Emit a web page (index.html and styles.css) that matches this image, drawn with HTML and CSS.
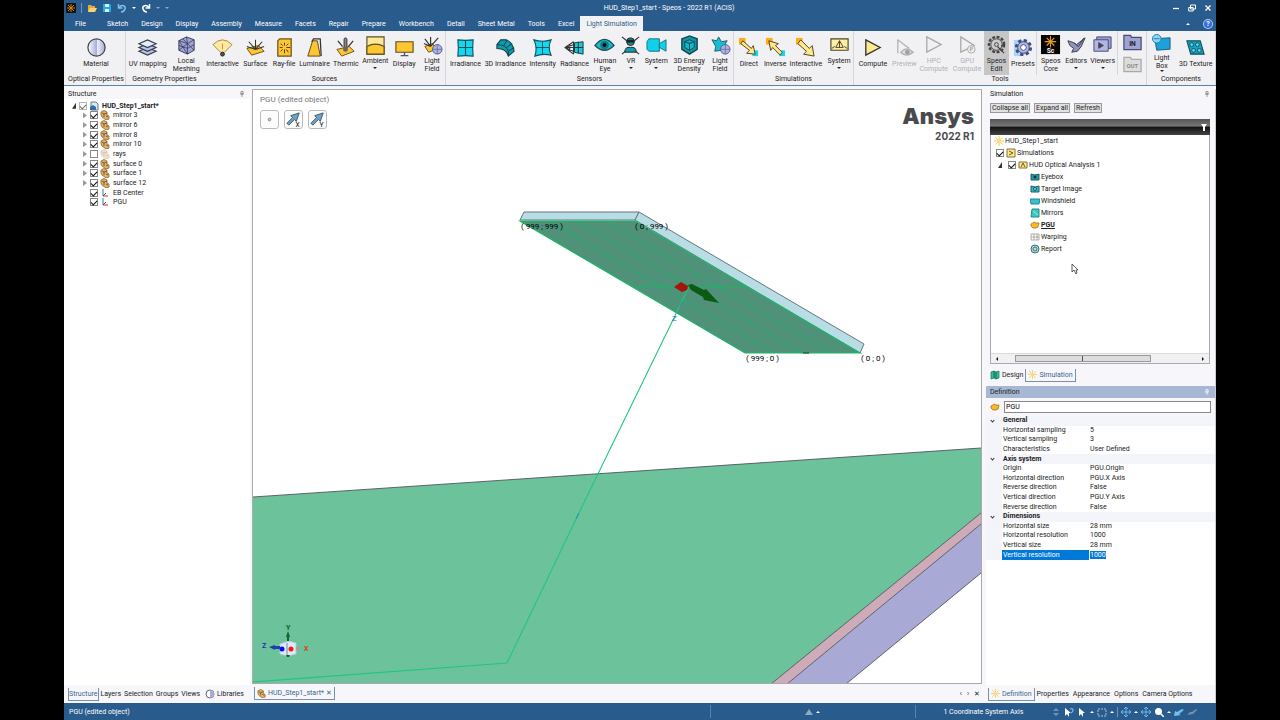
FILE: index.html
```html
<!DOCTYPE html>
<html lang="en">
<head>
  <meta charset="UTF-8">
  <meta name="viewport" content="width=device-width, initial-scale=1.0">
  <title>HUD_Step1_start - Speos</title>
  <link rel="stylesheet" href="styles.css">
</head>
<body>
<svg class="defs" aria-hidden="true">
  <symbol id="part" viewBox="0 0 10 10"><path d="M1 2l3-1.500 3 1.500v3l2 1v3l-3 1-4-3-1-2z" fill="#e2b26c" stroke="#8a622c" stroke-width=".8"/><path d="M2 3l2 1v3M4 4l3-1M6 6l2 1" stroke="#6b4416" fill="none" stroke-width=".8"/></symbol>
  <symbol id="sun" viewBox="0 0 10 10"><path d="M5 0v10M0 5h10M1.500 1.500l7 7M8.500 1.500l-7 7" stroke="#f7c95c"/><circle cx="5" cy="5" r="2" fill="#fbdc8c"/></symbol>
  <symbol id="axes" viewBox="0 0 10 10"><path d="M3 1v7" stroke="#277db0"/><path d="M3 8h5" stroke="#c33"/><path d="M3 8l3-3" stroke="#555"/></symbol>
  <symbol id="pin" viewBox="0 0 6 6"><path d="M2 .5h2v2.500h-2zM1 3h4M3 3v3" fill="none" stroke="currentColor" stroke-width=".7"/></symbol>
  <symbol id="pgu" viewBox="0 0 10 8"><path d="M1 3l2-1 1-1 2 1h3l-1 4-2 1H3L1 5z" fill="#fdb924" stroke="#8a661a" stroke-width=".7"/></symbol>
</svg>
<div class="app">
  <header class="titlebar">
    <div class="quick">
      <svg width="10" height="10" viewBox="0 0 10 10"><path d="M0 0h10v10H0z" fill="#171310"/><path d="M5 1v8M1 5h8M2 2l6 6M8 2l-6 6" stroke="#d98a1a" stroke-width=".9"/></svg>
      <i class="sep"></i>
      <svg width="10" height="10" viewBox="0 0 10 10"><path d="M1 9V2h3l1 1h3v2" fill="#e9a83a"/><path d="M1 9l2-4h7L8 9z" fill="#ffd272"/></svg>
      <svg width="10" height="10" viewBox="0 0 10 10"><path d="M1 1h7l1 1v7H1z" fill="#27a7ee"/><path d="M3 1h4v3H3zM3 6h4v3H3z" fill="#d8efff"/></svg>
      <svg width="10" height="10" viewBox="0 0 10 10"><path d="M1.500 1v4h4M2 4.500C5 1 9 3 8 6S5 9 4 9" fill="none" stroke="#7fbcf0" stroke-width="1.500"/></svg>
      <i class="caret"></i>
      <svg width="10" height="10" viewBox="0 0 10 10"><path d="M8.500 1v4h-4M8 4.500C5 1 1 3 2 6s3 3 4 3" fill="none" stroke="#fff" stroke-width="1.500"/></svg>
      <i class="caret dim"></i>
      <i class="caret dim"></i>
    </div>
    <h1>HUD_Step1_start - Speos - 2022 R1 (ACIS)</h1>
    <div class="window-btns">
      <button aria-label="Minimize"><svg width="8" height="8" viewBox="0 0 8 8"><path d="M1 4.500h6" stroke="#fff" stroke-width="1.300"/></svg></button>
      <button aria-label="Restore"><svg width="8" height="8" viewBox="0 0 8 8"><path d="M2.500 1h5v4h-5zM.7 3.500h4.500v3.500H.7z" fill="#2a5b8d" stroke="#fff"/></svg></button>
      <button aria-label="Close"><svg width="8" height="8" viewBox="0 0 8 8"><path d="M1.500 1.500l5 5M6.500 1.500l-5 5" stroke="#fff" stroke-width="1.400"/></svg></button>
    </div>
  </header>
  <nav class="tabs">
    <a href="#" class="file">File</a><a href="#">Sketch</a><a href="#">Design</a><a href="#">Display</a><a href="#">Assembly</a><a href="#">Measure</a><a href="#">Facets</a><a href="#">Repair</a><a href="#">Prepare</a><a href="#">Workbench</a><a href="#">Detail</a><a href="#">Sheet Metal</a><a href="#">Tools</a><a href="#">Excel</a><a href="#" class="active">Light Simulation</a>
    <span class="help"><i class="caret up"></i><b>?</b></span>
  </nav>

  <div class="ribbon">
    <section class="group optical">
      <div class="items">
        <button><svg viewBox="0 0 22 22"><defs><linearGradient id="ball"><stop stop-color="#fff"/><stop offset=".5" stop-color="#a9aed8"/><stop offset=".52" stop-color="#eef"/><stop offset="1" stop-color="#a9aed8"/></linearGradient></defs><circle cx="11" cy="11" r="9" fill="url(#ball)" stroke="#444" stroke-width="1.300"/></svg>Material</button>
      </div>
      <h2>Optical Properties</h2>
    </section>
    <section class="group geometry">
      <div class="items">
        <button><svg viewBox="0 0 22 22" fill="#b9c4e4" stroke="#333b4d" stroke-width="1.200"><path d="M2 15l9-4 9 4-9 4z"/><path d="M2 11l9-4 9 4-9 4z"/><path d="M2 7l9-4 9 4-9 4z" fill="#e6ebf8"/></svg>UV mapping</button>
        <button class="two"><svg viewBox="0 0 22 22" fill="#9ea4cf" stroke="#333a5c"><path d="M3 6l8-4 8 3v11l-7 4-9-4z"/><path d="M3 6l9 3 7-4M12 9v11M3 6l9 14M3 16l9-7 7 7M11 2l1 7M7 4l5 5M3 11l9 3 7-4" fill="none" stroke-width=".8"/></svg>Local<br>Meshing</button>
      </div>
      <h2>Geometry Properties</h2>
    </section>
    <section class="group sources">
      <div class="items">
        <button><svg viewBox="0 0 22 22"><path d="M9 16L1 8q10-10 20 0l-8 8z" fill="#ffe9a0" stroke="#a98838"/><path d="M11 7v6" stroke="#d48b4a"/><circle cx="11" cy="18" r="2" fill="#555" stroke="#222"/></svg>Interactive</button>
        <button><svg viewBox="0 0 22 22"><path d="M2 12l12-3 6 6-13 4z" fill="#fdc52f" stroke="#6b5218"/><path d="M11 13V3M11 13L4 5M11 13l7-8M11 13L2 10M11 13l9-3" stroke="#333" stroke-width="1.100"/></svg>Surface</button>
        <button><svg viewBox="0 0 22 22"><path d="M6 2h12v18H4V4z" fill="#fdc52f" stroke="#6b5218" stroke-width="1.300"/><path d="M11 6v3M11 13v4M6 11h3M13 11h4M7 7l2 2M13 13l2 3M15 7l-2 2M7 15l2-2" stroke="#4c3a10"/></svg>Ray-file</button>
        <button><svg viewBox="0 0 22 22"><path d="M9 4h5l3 16H4z" fill="#fdc52f" stroke="#5b4618"/><path d="M8 5l2-3h7l1 18" fill="none" stroke="#333" stroke-width="1.300"/></svg>Luminaire</button>
        <button><svg viewBox="0 0 22 22"><path d="M2 13l13-3 5 5-13 5z" fill="#fdc52f" stroke="#6b5218"/><path d="M3 4l5 6M19 4l-5 6" stroke="#333" stroke-width="1.300"/><rect x="9.500" y="1" width="3" height="12" rx="1.500" fill="#888" stroke="#333"/><circle cx="11" cy="13" r="2.500" fill="#666"/></svg>Thermic</button>
        <button class="two"><svg viewBox="0 0 22 22"><path d="M2 2h18v18H2z" fill="#ffe79a" stroke="#5c4d26" stroke-width="1.200"/><path d="M2 12q9-5 18 0v8H2z" fill="#fdc52f" stroke="#5c4d26" stroke-width="1.200"/></svg>Ambient<i class="caret"></i></button>
        <button><svg viewBox="0 0 22 22"><path d="M2 5h18v11H2z" fill="#fdc52f" stroke="#5c4d26" stroke-width="1.200"/><path d="M11 16v3M7 19.500h8" stroke="#555" stroke-width="1.400"/></svg>Display</button>
        <button class="two"><svg viewBox="0 0 22 22"><path d="M3 12l8-3 4 6-8 3z" fill="#fdc52f" stroke="#6b5218"/><path d="M9 12V2M9 12L3 4M9 12l8-9M9 12l-7-3" stroke="#333" stroke-width="1.200"/><circle cx="16" cy="15" r="5" fill="#aeb3dd" stroke="#555e99"/><path d="M16 10v10M11 15h10" stroke="#555e99" stroke-width=".7"/></svg>Light<br>Field</button>
      </div>
      <h2>Sources</h2>
    </section>
    <section class="group sensors">
      <div class="items">
        <button><svg viewBox="0 0 22 22"><path d="M3 3q8 1 16 0-1 8 0 17-8-1-16 0 1-9 0-17z" fill="#16d7ef" stroke="#14535e" stroke-width="1.200"/><path d="M11 4v15M4 11h15" stroke="#14535e" stroke-width="1.200"/></svg>Irradiance</button>
        <button><svg viewBox="0 0 22 22"><path d="M2 8l4-5h6q7 3 8 12l-6 5q-2-8-12-8z" fill="#0b9cad" stroke="#143c44" stroke-width="1.100"/><path d="M14 20v-5q-2-7-12-7M14 15l6-4M9 9l4-6M12 11l6-4" fill="none" stroke="#143c44"/></svg>3D Irradiance</button>
        <button><svg viewBox="0 0 22 22"><path d="M2 3q9 3 18 0-4 8 0 16-9-2-17 1 3-9-1-17z" fill="#16d7ef" stroke="#14535e" stroke-width="1.200"/><path d="M11 4v14M4 11h14" stroke="#14535e"/></svg>Intensity</button>
        <button><svg viewBox="0 0 22 22"><path d="M11 6l9-1v13l-9-2z" fill="#16c9df" stroke="#173c43"/><path d="M10 5L1 11l9 7M1 11h19M15 5v12M10 5v13M6 8v7M1 11l9-3M1 11l9 4" fill="none" stroke="#333" stroke-width="1.100"/></svg>Radiance</button>
        <button class="two"><svg viewBox="0 0 22 22"><path d="M1 11q10-13 20 0-10 10-20 0z" fill="#18b8cc" stroke="#244d55" stroke-width="1.300"/><circle cx="11" cy="10.500" r="4.500" fill="#137887"/><circle cx="11" cy="10.500" r="2" fill="#111"/></svg>Human<br>Eye</button>
        <button class="two"><svg viewBox="0 0 22 22"><path d="M2 2l5 4M20 2l-5 4M2 20l5-4M20 20l-5-4" stroke="#333" stroke-width="1.200"/><circle cx="11" cy="7" r="4" fill="#1292a5" stroke="#222"/><path d="M7 5h8v3H7z" fill="#222"/><path d="M5 18q0-6 6-5 6-1 6 5z" fill="#129caf" stroke="#222"/></svg>VR<i class="caret"></i></button>
        <button class="two"><svg viewBox="0 0 22 22"><path d="M1 7l2-3h11v13H3l-2-2zM14 9l7-4v12l-7-4z" fill="#10d0ea" stroke="#177785"/></svg>System<i class="caret"></i></button>
        <button class="two"><svg viewBox="0 0 22 22"><path d="M3 4l8-3 8 3v11l-8 5-8-5z" fill="#0899a9" stroke="#17454d" stroke-width="1.500"/><path d="M6 7l5-2 5 2v6l-5 3-5-3zM6 7l5 2 5-2M11 9v7" fill="#0fb8cb" stroke="#17454d"/></svg>3D Energy<br>Density</button>
        <button class="two"><svg viewBox="0 0 22 22"><path d="M2 5l5 1 2-4 3 5 6-1-3 5-3 5-7 1 1-5z" fill="#15bed2" stroke="#245d67"/><circle cx="16" cy="15" r="5" fill="#aeb3dd" stroke="#555e99"/><path d="M16 10v10M11 15h10" stroke="#555e99" stroke-width=".7"/></svg>Light<br>Field</button>
      </div>
      <h2>Sensors</h2>
    </section>
    <section class="group simulations">
      <div class="items">
        <button><svg viewBox="0 0 22 22"><path d="M1 1h7v7H1z" fill="#ffad17"/><path d="M15 14h6v6h-6z" fill="#14d7ef"/><path d="M5 4l9 8 2-3 2 9-9-1 3-3-9-7z" fill="#ffe78a" stroke="#4d4320"/></svg>Direct</button>
        <button><svg viewBox="0 0 22 22"><path d="M1 1h7v7H1z" fill="#ffad17"/><path d="M15 14h6v6h-6z" fill="#14d7ef"/><path d="M18 16l-7-7 3-2-10-3 2 10 2-3 8 8z" fill="#ffe78a" stroke="#4d4320"/></svg>Inverse</button>
        <button><svg viewBox="0 0 22 22"><path d="M1 1h7v7H1z" fill="#ffad17"/><path d="M6 3l9 9 3-3 2 11-11-2 3-3-9-8z" fill="#ffe78a" stroke="#4d4320"/></svg>Interactive</button>
        <button class="two"><svg viewBox="0 0 22 22"><path d="M2 4h18v12H2z" fill="#ffeea8" stroke="#4d4320" stroke-width="1.200"/><path d="M7 13l4-7 4 7zM11 6v7M3 14l3-2M19 14l-3-2" fill="none" stroke="#4d4320"/></svg>System<i class="caret"></i></button>
      </div>
      <h2>Simulations</h2>
    </section>
    <section class="group tools">
      <div class="items">
        <button><svg viewBox="0 0 22 22"><path d="M4 3l15 8-15 8z" fill="#ffe98e" stroke="#333" stroke-width="1.400"/></svg>Compute</button>
        <button class="off"><svg viewBox="0 0 22 22" fill="none" stroke="#aaa" stroke-width="1.200"><path d="M4 17V3l12 9"/><path d="M7 16q6-7 13 0-7 6-13 0z" fill="#ddd"/><circle cx="14" cy="16" r="2" fill="#999"/></svg>Preview</button>
        <button class="two off"><svg viewBox="0 0 22 22"><path d="M4 2l15 8-15 8z" fill="none" stroke="#aaa" stroke-width="1.400"/></svg>HPC<br>Compute</button>
        <button class="two off"><svg viewBox="0 0 22 22"><path d="M4 2l14 9-14 7z" fill="none" stroke="#aaa" stroke-width="1.400"/><circle cx="15" cy="15" r="4" fill="#eee" stroke="#aaa"/><path d="M14 17v-4h2v2h-2" fill="none" stroke="#aaa"/></svg>GPU<br>Compute</button>
        <button class="two pressed"><svg viewBox="0 0 22 22"><circle cx="11" cy="10" r="8" fill="#b8b8b8" stroke="#444" stroke-width="2.400" stroke-dasharray="3 1.700"/><circle cx="11" cy="10" r="6" fill="#ccc" stroke="#444"/><circle cx="11" cy="10" r="2" fill="none" stroke="#444"/><path d="M12 12l7 7M16 12l3-3" stroke="#444" stroke-width="1.300"/></svg>Speos<br>Edit</button>
        <button><svg viewBox="0 0 22 22"><path d="M2 3h9v17H2z" fill="#a8d5f5"/><circle cx="12" cy="11" r="7.500" fill="#b5bbe6" stroke="#3d4d7b" stroke-width="3" stroke-dasharray="3.300 2.600"/><circle cx="12" cy="11" r="6" fill="#b5bbe6" stroke="#3d4d7b"/><circle cx="12" cy="11" r="3" fill="#fff" stroke="#3d4d7b"/></svg>Presets</button>
        <button class="two line"><svg viewBox="0 0 22 22"><path d="M1 0h20v20H1z" fill="#080604"/><path d="M11 1v12M5 7h12M7 3l8 8M15 3l-8 8" stroke="#e59b20" stroke-width="1.200"/><text x="11" y="19" text-anchor="middle" font-size="7" font-weight="700" fill="#fff">Sc</text></svg>Speos<br>Core</button>
        <button class="two"><svg viewBox="0 0 22 22"><path d="M2 6l6 2 3 2 9-7-4 9-4 5-6 1 2-4-4-3z" fill="#8f93b7" stroke="#373d54"/><path d="M8 8l5 4 6-9" fill="none" stroke="#373d54"/></svg>Editors<i class="caret"></i></button>
        <button class="two"><svg viewBox="0 0 22 22" fill="#9b9fd1" stroke="#464b75"><path d="M5 2h15v12H5z"/><path d="M2 5h15v12H2z" fill="#b3b6e0"/><path d="M7 8l5 3-5 3z" fill="#444"/></svg>Viewers<i class="caret"></i></button>
        <div class="inout line">
          <button aria-label="Import"><svg viewBox="0 0 22 20"><path d="M2 2h7l1 2h10v13H2z" fill="#9ea3d4" stroke="#454b72" stroke-width="1.300"/><text x="11" y="13" text-anchor="middle" font-size="7" font-weight="700" fill="#222">IN</text></svg></button>
          <button aria-label="Export"><svg viewBox="0 0 22 20"><path d="M2 2h7l1 2h10v13H2z" fill="#ddd" stroke="#aaa" stroke-width="1.300"/><text x="11" y="13" text-anchor="middle" font-size="6" font-weight="700" fill="#888">OUT</text></svg></button>
        </div>
      </div>
      <h2>Tools</h2>
    </section>
    <section class="group components">
      <div class="items">
        <button class="two tall"><svg viewBox="0 0 22 22"><path d="M4 6l16-1v12l-14 1z" fill="#1ba2da" stroke="#175e7d"/><circle cx="6" cy="6" r="4.500" fill="#8fd4f3" stroke="#1b7fae"/><path d="M3 6h6" stroke="#1b7fae"/></svg>Light<br>Box<i class="caret"></i></button>
        <button><svg viewBox="0 0 22 22"><path d="M2 4h14l4 14H6z" fill="#14a3c4" stroke="#13515f" stroke-width="1.200"/><circle cx="7" cy="8" r="2" fill="#5fd5ea" stroke="#13515f"/><circle cx="13" cy="8" r="2" fill="#5fd5ea" stroke="#13515f"/><circle cx="9" cy="14" r="2" fill="#5fd5ea" stroke="#13515f"/><circle cx="15" cy="14" r="2" fill="#5fd5ea" stroke="#13515f"/></svg>3D Texture</button>
      </div>
      <h2>Components</h2>
    </section>
  </div>

  <main class="work">
    <aside class="structure">
      <h3>Structure <svg width="6" height="6"><use href="#pin"/></svg></h3>
      <ul class="tree">
        <li class="root"><i class="arrow open"></i><label><input type="checkbox" checked class="part-on"><svg><path d="M2 1h5l2 2v6H2z" fill="#dde8f2" stroke="#678"/><path d="M1 6l3-2 3 2v3H1z" fill="#2f6fa8"/></svg>HUD_Step1_start*</label></li>
        <li><i class="arrow"></i><label><input type="checkbox" checked><svg><use href="#part"/></svg>mirror 3</label></li>
        <li><i class="arrow"></i><label><input type="checkbox" checked><svg><use href="#part"/></svg>mirror 6</label></li>
        <li><i class="arrow"></i><label><input type="checkbox" checked><svg><use href="#part"/></svg>mirror 8</label></li>
        <li><i class="arrow"></i><label><input type="checkbox" checked><svg><use href="#part"/></svg>mirror 10</label></li>
        <li><i class="arrow"></i><label><input type="checkbox"><svg class="faded"><use href="#part"/></svg>rays</label></li>
        <li><i class="arrow"></i><label><input type="checkbox" checked><svg><use href="#part"/></svg>surface 0</label></li>
        <li><i class="arrow"></i><label><input type="checkbox" checked><svg><use href="#part"/></svg>surface 1</label></li>
        <li><i class="arrow"></i><label><input type="checkbox" checked><svg><use href="#part"/></svg>surface 12</label></li>
        <li><i class="arrow none"></i><label><input type="checkbox" checked><svg><use href="#axes"/></svg>EB Center</label></li>
        <li><i class="arrow none"></i><label><input type="checkbox" checked><svg><use href="#axes"/></svg>PGU</label></li>
      </ul>
      <nav class="dock-tabs narrow">
        <a href="#" class="active">Structure</a><a href="#">Layers</a><a href="#">Selection</a><a href="#">Groups</a><a href="#">Views</a><a href="#" class="libs"><svg width="10" height="10" viewBox="0 0 10 10"><circle cx="5" cy="5" r="4" fill="#fff" stroke="#667"/><path d="M5 1a4 4 0 010 8z" fill="#a9aed8"/></svg>Libraries</a>
      </nav>
    </aside>

    <section class="center">
      <div class="viewport">
        <svg class="scene" viewBox="253 90 728 594" preserveAspectRatio="xMinYMin slice">
          <!-- windshield body -->
          <path d="M981 524L787 684h59L981 573z" fill="#a9a9d6"/>
          <path d="M981 513L771 684h16L981 524z" fill="#cdabb8"/>
          <path d="M253 497L981 448v65L771 684H253z" fill="#6cc29b"/>
          <path d="M253 497L981 448M981 513L771 684M981 524L787 684M981 573L846 684" fill="none" stroke="#54545c" stroke-width=".9"/>
          <!-- display slab -->
          <path d="M520 220l4-8h115l-4 8z" fill="#b8dde4" stroke="#65777e"/>
          <path d="M639 212l225 132-4 9-225-133z" fill="#b8dde4" stroke="#65777e"/>
          <path d="M520 221h115l225 132H745z" fill="#50917a" stroke="#18b768" stroke-width="1.200"/>
          <path d="M549 221l225 132M577 221l225 132M606 221l225 132M633 287.500h115" stroke="#14b866" stroke-width=".9" fill="none"/>
          <path d="M803 353h6" stroke="#163d2b"/>
          <path d="M688 289L577 517 507 663 253 682" fill="none" stroke="#1fc87b" stroke-width="1.100"/>
          <path d="M683 301l-3 6M579 513l-3 6" stroke="#258cbe"/>
          <path d="M674 287l7-5 7 4-1 4-5 2z" fill="#a3140c"/>
          <path d="M688 285l4-1 12 6 2-1 13 14-15-3-1-3-12-7z" fill="#0c5a14"/>
          <g class="coord">
            <text x="521" y="229">( 999 ; 999 )</text><text x="635" y="229">( 0 ; 999 )</text>
            <text x="746" y="361">( 999 ; 0 )</text><text x="861" y="361">( 0 ; 0 )</text>
            <text x="672" y="321" fill="#2a6fc0">Z</text>
          </g>
          <!-- orientation triad -->
          <path d="M280 644l9-3 7 2v11l-8 2-8-2z" fill="#dbeaf4" stroke="#b4c9d6"/>
          <path d="M287 643v12" stroke="#789"/>
          <circle cx="282" cy="649" r="2.500" fill="#0010f0"/><circle cx="291" cy="649" r="2.500" fill="#f51b10"/>
          <path d="M288 631l2 6h-1v4h-2v-4h-1zM286 655h4l-1 2h-2z" fill="#0d6428"/>
          <path d="M269 647l6-2v1h5v3h-5v1z" fill="#1c41a8"/>
          <path d="M296 647l5 1-5 2z" fill="#b09a93"/>
          <g class="triad"><text x="286" y="630" fill="#0d6428">Y</text><text x="262" y="648" fill="#1c30a8">Z</text><text x="304" y="651" fill="#e33c1c">X</text></g>
        </svg>
        <div class="overlay">
          <p>PGU (edited object)</p>
          <button aria-label="Origin"><svg viewBox="0 0 18 18"><circle cx="9" cy="9" r="1.500" fill="#bcd" stroke="#889"/></svg></button>
          <button aria-label="X axis"><svg viewBox="0 0 18 18"><path d="M2 13L8 7 6 5l9-3-3 9-2-2-6 6z" fill="#6fa3c4" stroke="#3e5866"/><text x="11" y="17" font-size="7">X</text></svg></button>
          <button aria-label="Y axis"><svg viewBox="0 0 18 18"><path d="M2 13L8 7 6 5l9-3-3 9-2-2-6 6z" fill="#6fa3c4" stroke="#3e5866"/><text x="11" y="17" font-size="7">Y</text></svg></button>
        </div>
        <div class="brand"><strong>Ansys</strong><span>2022 R1</span></div>
      </div>
      <nav class="dock-tabs docs">
        <a href="#" class="active"><svg width="9" height="9"><use href="#part"/></svg>HUD_Step1_start* &#10005;</a>
        <span class="nav-btns"><button aria-label="Previous">&#8249;</button><button aria-label="Next">&#8250;</button><button aria-label="Close">&#10005;</button></span>
      </nav>
    </section>

    <aside class="right">
      <h3>Simulation <svg width="6" height="6"><use href="#pin"/></svg></h3>
      <div class="actions"><button>Collapse all</button><button>Expand all</button><button>Refresh</button></div>
      <div class="filterbar"><svg width="6" height="8" viewBox="0 0 6 8"><path d="M0 1h6L4 4v4H2V4z" fill="#fff"/></svg></div>
      <div class="sim">
        <ul class="simtree">
          <li class="l0"><svg><use href="#sun"/></svg>HUD_Step1_start</li>
          <li class="l1"><label><input type="checkbox" checked><svg><path d="M1 1h8v8H1z" fill="#ffe98e" stroke="#86713a"/><path d="M3 3l4 2-4 2" fill="none" stroke="#6b5a20"/></svg>Simulations</label></li>
          <li class="l2"><i class="arrow open"></i><label><input type="checkbox" checked><svg><path d="M1 2h8v6H1z" fill="#ffe98e" stroke="#86713a"/><path d="M3 7l2-4 2 4" fill="none" stroke="#6b5a20"/></svg>HUD Optical Analysis 1</label></li>
          <li class="l3"><svg><path d="M1 2l4 1 4-1v6H1z" fill="#1d9aa8" stroke="#2c5a61"/><circle cx="5" cy="5" r="1.500" fill="#134"/></svg>Eyebox</li>
          <li class="l3"><svg><path d="M1 2l4 1 4-1v6H1z" fill="#2bb9ce" stroke="#2c5a61"/><circle cx="5" cy="5" r="1.500" fill="#9ee" stroke="#155"/></svg>Target Image</li>
          <li class="l3"><svg><path d="M0 3h10L9 8H1z" fill="#2fc4d6" stroke="#2c8490"/></svg>Windshield</li>
          <li class="l3"><svg><path d="M2 1h7v8H1z" fill="#3ac6c4" stroke="#2a8d83"/><path d="M3 3l5 4" stroke="#9ee"/></svg>Mirrors</li>
          <li class="l3 current"><svg><use href="#pgu"/></svg>PGU</li>
          <li class="l3"><svg><path d="M1 2h8v6H1zM1 5h8M4 2v6M7 2v6" fill="#fff" stroke="#999" stroke-width=".8"/></svg>Warping</li>
          <li class="l3"><svg><circle cx="5" cy="5" r="4" fill="#bfe0e2" stroke="#356d75"/><circle cx="5" cy="5" r="2" fill="none" stroke="#356d75"/></svg>Report</li>
        </ul>
        <svg class="cursor" width="8" height="12" viewBox="0 0 8 12"><path d="M1 1v8l2-2 2 4 1-1-1-3h2z" fill="#fff" stroke="#333" stroke-width=".8"/></svg>
        <div class="hscroll"><i class="left"></i><span></span><i class="right-arrow"></i></div>
      </div>
      <nav class="dock-tabs mid">
        <a href="#"><svg width="10" height="10" viewBox="0 0 10 10"><path d="M1 2l3-1v7L1 9zM4 1l2 1v7L4 8zM6 2l3-1v7L6 9z" fill="#2fbf9a" stroke="#17705b" stroke-width=".7"/></svg>Design</a><a href="#" class="active"><svg width="9" height="9"><use href="#sun"/></svg>Simulation</a>
      </nav>
      <h3 class="def">Definition <svg width="6" height="6"><use href="#pin"/></svg></h3>
      <div class="name"><svg width="10" height="8"><use href="#pgu"/></svg><input type="text" value="PGU" aria-label="Name"></div>
      <div class="props">
        <table>
          <colgroup><col class="c-mark"><col class="c-name"><col></colgroup>
          <tr class="cat"><td><i></i></td><th colspan="2">General</th></tr>
          <tr><td></td><th>Horizontal sampling</th><td>5</td></tr>
          <tr><td></td><th>Vertical sampling</th><td>3</td></tr>
          <tr><td></td><th>Characteristics</th><td>User Defined</td></tr>
          <tr class="cat"><td><i></i></td><th colspan="2">Axis system</th></tr>
          <tr><td></td><th>Origin</th><td>PGU.Origin</td></tr>
          <tr><td></td><th>Horizontal direction</th><td>PGU.X Axis</td></tr>
          <tr><td></td><th>Reverse direction</th><td>False</td></tr>
          <tr><td></td><th>Vertical direction</th><td>PGU.Y Axis</td></tr>
          <tr><td></td><th>Reverse direction</th><td>False</td></tr>
          <tr class="cat"><td><i></i></td><th colspan="2">Dimensions</th></tr>
          <tr><td></td><th>Horizontal size</th><td>28 mm</td></tr>
          <tr><td></td><th>Horizontal resolution</th><td>1000</td></tr>
          <tr><td></td><th>Vertical size</th><td>28 mm</td></tr>
          <tr class="selected"><td></td><th>Vertical resolution</th><td><mark>1000</mark></td></tr>
        </table>
      </div>
      <nav class="dock-tabs">
        <a href="#" class="active"><svg width="9" height="9"><use href="#sun"/></svg>Definition</a><a href="#">Properties</a><a href="#">Appearance</a><a href="#">Options</a><a href="#">Camera Options</a>
      </nav>
    </aside>
  </main>

  <footer class="status">
    <span class="msg">PGU (edited object)</span>
    <span class="warn"><svg width="8" height="8" viewBox="0 0 8 8"><path d="M4 1l4 6H0z" fill="#8fa9c2"/></svg><i class="caret up"></i></span>
    <span class="sel">1 Coordinate System Axis</span>
    <div class="status-icons">
      <svg viewBox="0 0 10 10"><path d="M5 1l3 3H2zM5 9l3-3H2z" fill="#6d96bd"/></svg>
      <svg viewBox="0 0 10 10"><path d="M1 1v8l2-2 2 3V6h2z" fill="#fff"/><path d="M6 2q3-1 3 1T7 6" fill="none" stroke="#6fbdf0" stroke-width="1.300"/></svg>
      <svg viewBox="0 0 10 10"><path d="M2 1v8l2-2 2 3V6h2z" fill="#fff"/></svg>
      <i class="caret up"></i>
      <svg viewBox="0 0 10 10"><path d="M1 2h8v7H1z" fill="none" stroke="#9cc7ec" stroke-dasharray="2 1"/></svg>
      <i class="caret up"></i><i class="sep"></i>
      <svg viewBox="0 0 10 10"><path d="M5 0v10M0 5h10M3 2l2-2 2 2M3 8l2 2 2-2M2 3L0 5l2 2M8 3l2 2-2 2" fill="none" stroke="#6fb5ea"/></svg>
      <i class="caret up"></i>
      <svg viewBox="0 0 10 10"><path d="M5 0v10M0 5h10M3 2l2-2 2 2M3 8l2 2 2-2M2 3L0 5l2 2M8 3l2 2-2 2" fill="none" stroke="#6fb5ea"/></svg>
      <svg viewBox="0 0 10 10"><circle cx="4.500" cy="4.500" r="3.500" fill="#fff"/><path d="M7 7l3 3" stroke="#fff" stroke-width="1.500"/></svg>
      <i class="caret up"></i>
      <svg viewBox="0 0 10 10"><path d="M0 9l1-5 2 1 5-3 2 1-5 4 2 1z" fill="#6fc0f5"/></svg>
      <svg viewBox="0 0 10 10"><path d="M0 8l3-3h2l4-3 1 1-4 4z" fill="#7391ac"/></svg>
    </div>
  </footer>
</div>
</body>
</html>
```
FILE: styles.css
```css
* {
  box-sizing: border-box;
}
body {
  margin: 0;
  padding: 0 5%;
  background: #000;
  color: #222;
  font: 7px/8px Roboto, "Liberation Sans", sans-serif;
}
h1, h2, h3, p, ul {
  margin: 0;
  padding: 0;
  font-size: inherit;
  font-weight: 400;
}
button {
  margin: 0;
  padding: 0;
  border: 0;
  background: none;
  color: inherit;
  font: inherit;
}
a {
  color: inherit;
  text-decoration: none;
}
svg {
  display: block;
  flex: none;
}
.defs {
  position: absolute;
  width: 0;
  height: 0;
}
.app {
  display: flex;
  flex-direction: column;
  height: 100vh;
  background: #f7f7fb;
}
.caret {
  flex: none;
  border: 2px solid transparent;
  border-top-color: currentColor;
  border-bottom: 0;
}
.caret.up {
  border-top: 0;
  border-bottom: 2px solid currentColor;
}
.dim {
  opacity: .5;
}
.sep {
  width: 1px;
  height: 10px;
  background: #7795b3;
}

/* title bar and menu tabs */
.titlebar {
  display: grid;
  grid-template-columns: 1fr auto 1fr;
  align-items: center;
  height: 15px;
  padding: 0 4px 0 2px;
  background: #2a5b8d;
  color: #fff;
}
.quick {
  display: flex;
  align-items: center;
  gap: 5px;
}
.titlebar h1 {
  padding-left: 60px;
}
.window-btns {
  display: flex;
  justify-content: flex-end;
  gap: 8px;
}
.tabs {
  display: flex;
  height: 16px;
  padding: 1px 4px 0;
  background: #2a5b8d;
  color: #fff;
}
.tabs a {
  padding: 4px 6px 0 7px;
}
.tabs .file {
  padding-right: 14px;
}
.tabs .active {
  padding: 4px 6px 0;
  background: #f2f2f5;
  color: #2a5b8d;
}
.help {
  display: flex;
  align-items: center;
  gap: 14px;
  margin-left: auto;
}
.help b {
  width: 8px;
  border-radius: 50%;
  background: #2d6fe0;
  text-align: center;
  box-shadow: 0 0 0 1px #b8ccec;
}

/* ribbon */
.ribbon {
  display: grid;
  grid-template-columns: 62fr 78fr 242fr 288fr 120fr 293fr 69fr;
  height: 55px;
  background: #f1f1f4;
  border-bottom: 1px solid #5c82aa;
}
.group {
  display: flex;
  flex-direction: column;
  justify-content: space-between;
  min-width: 0;
  border-right: 1px solid #d5d5da;
}
.optical {
  padding-left: 3px;
}
.geometry {
  border-right-color: transparent;
}
.group h2 {
  height: 10px;
  text-align: center;
  white-space: nowrap;
}
.items {
  display: grid;
  height: 43px;
}
.geometry .items { grid-template-columns: 44fr 34fr; }
.sources .items { grid-template-columns: 37fr 29fr 29fr 32fr 31fr 28fr 30fr 26fr; }
.sensors .items { grid-template-columns: 39fr 41fr 34fr 30fr 31fr 21fr 30fr 36fr 26fr; }
.simulations .items { grid-template-columns: 30fr 23fr 39fr 28fr; }
.tools .items { grid-template-columns: 38fr 25fr 34fr 33fr 26fr 27fr 28fr 24fr 29fr 29fr; }
.components .items { grid-template-columns: 30fr 39fr; }
.items button {
  display: flex;
  flex-direction: column;
  align-items: center;
  min-width: 0;
  padding-top: 6px;
  white-space: nowrap;
}
.items button.two {
  padding-top: 4px;
}
.items svg {
  width: 21px;
  height: 21px;
  margin-bottom: 2px;
}
.items .two svg {
  margin-bottom: 1px;
}
.items .caret {
  margin-top: 2px;
}
.items button.tall {
  padding-top: 2px;
}
.items .tall svg {
  margin-bottom: 0;
}
.items .tall .caret {
  margin-top: 0;
}
.items .off {
  color: #b0b0b4;
}
.items .pressed {
  background: #c6c6c8;
}
.items .line {
  border-left: 1px solid #d5d5da;
}
.inout button {
  width: 100%;
  padding-top: 2px;
}
.inout svg {
  height: 20px;
  margin: 0;
}

/* work area */
.work {
  flex: 1;
  display: grid;
  grid-template-columns: 186px 1fr 232px;
  column-gap: 2px;
  min-height: 0;
  padding-top: 3px;
}
.structure, .center, .right {
  display: flex;
  flex-direction: column;
  min-width: 0;
  min-height: 0;
}
h3 {
  display: flex;
  align-items: center;
  justify-content: space-between;
  flex: none;
  height: 10px;
  padding: 0 5px 0 4px;
}
h3 svg {
  color: #777;
}
.tree {
  flex: 1;
  display: grid;
  grid-template-rows: repeat(11, minmax(0, 1fr));
  align-content: start;
  max-height: 106px;
  margin: 2px 0 auto;
  padding-left: 17px;
  list-style: none;
}
.tree li, .tree label, .simtree li, .simtree label {
  display: flex;
  align-items: center;
}
.tree svg, .simtree svg {
  width: 10px;
  height: 10px;
}
.tree svg {
  margin: 0 3px 0 2px;
}
.tree .root {
  margin-left: -11px;
  font-weight: 700;
}
.structure {
  background: linear-gradient(#f7f7fb 10px, #fff 10px);
}
.faded {
  opacity: .35;
}
.arrow {
  flex: none;
  width: 4px;
  height: 6px;
  margin: 0 3px 0 2px;
  background: #999;
  clip-path: polygon(0 0, 100% 50%, 0 100%);
}
.arrow.open {
  background: #333;
  clip-path: polygon(100% 0, 100% 100%, 0 100%);
}
.arrow.none {
  visibility: hidden;
}
input[type=checkbox] {
  appearance: none;
  flex: none;
  display: grid;
  place-items: center;
  width: 8px;
  height: 8px;
  margin: 0;
  border: 1px solid #888;
  background: #fff;
}
input[type=checkbox]:checked::after {
  content: "";
  width: 5px;
  height: 3px;
  border: solid #111;
  border-width: 0 0 1px 1px;
  transform: rotate(-45deg);
}
.part-on {
  opacity: .6;
}
.dock-tabs {
  display: flex;
  align-items: center;
  flex: none;
  height: 18px;
  padding: 0 2px;
  background: #f7f7fb;
}
.dock-tabs a {
  display: flex;
  align-items: center;
  gap: 2px;
  height: 13px;
  padding: 0 2px;
}
.dock-tabs .active {
  border: 1px solid #7890a8;
  border-top: 0;
  color: #39658f;
}
.narrow {
  padding: 0 4px;
}
.narrow a {
  padding: 0 1px 0 2px;
}
.narrow .active {
  padding: 0;
}
.narrow .libs {
  padding-left: 4px;
}
.viewport {
  position: relative;
  flex: 1;
  min-height: 0;
  overflow: hidden;
  border: 1px solid #aaa;
  background: #fff;
}
.scene {
  width: 100%;
  height: 100%;
}
.coord {
  font-size: 8px;
}
.triad {
  font-size: 7px;
  font-weight: 700;
}
.overlay {
  position: absolute;
  top: 6px;
  left: 7px;
  display: flex;
  flex-wrap: wrap;
  gap: 6px 5px;
  width: 90px;
  font-size: 8px;
  color: #777;
}
.overlay p {
  width: 100%;
}
.overlay button {
  width: 19px;
  height: 19px;
  border: 1px solid #bbb;
  border-radius: 3px;
  background: #fcfcfc;
}
.brand {
  position: absolute;
  top: 13px;
  right: 7px;
  display: flex;
  flex-direction: column;
  align-items: flex-end;
  color: #4a4a4e;
  font-family: Inter, "Open Sans", sans-serif;
  font-weight: 700;
}
.brand strong {
  font-size: 22px;
  line-height: 27px;
}
.brand span {
  font-size: 10px;
  line-height: 12px;
}
.docs {
  height: 19px;
}
.nav-btns {
  display: flex;
  gap: 5px;
  margin-left: auto;
}

/* right column */
.right {
  margin-left: 2px;
  border-right: 1px solid #ccc;
}
.actions {
  display: flex;
  gap: 4px;
  padding: 4px 4px 6px;
}
.actions button {
  height: 10px;
  padding: 0 1px;
  border: 1px solid #999;
  background: #e2e2e2;
  line-height: 8px;
}
.filterbar {
  display: flex;
  align-items: center;
  justify-content: flex-end;
  flex: none;
  height: 16px;
  margin: 0 5px 0 4px;
  padding-right: 3px;
  background: linear-gradient(#555, #777 45%, #111 50%, #444);
}
.sim {
  position: relative;
  display: flex;
  flex-direction: column;
  flex: 0 0 229px;
  margin: 0 5px 0 4px;
  border: 1px solid #aaa;
  border-top: 0;
  background: #fff;
}
.simtree {
  list-style: none;
}
.simtree li {
  height: 12px;
}
.simtree svg {
  margin-right: 1px;
}
.simtree input {
  margin-right: 2px;
}
.simtree .arrow {
  margin-right: 6px;
}
.l0 { padding-left: 3px; }
.l1 { padding-left: 5px; }
.l2 { padding-left: 5px; }
.l3 { padding-left: 39px; }
.current {
  font-weight: 700;
  text-decoration: underline;
}
.cursor {
  position: absolute;
  top: 128px;
  left: 80px;
}
.hscroll {
  display: flex;
  align-items: center;
  justify-content: space-between;
  height: 10px;
  margin-top: auto;
  padding: 0 3px;
  border-top: 1px solid #ddd;
  background: #f1f1f1;
}
.hscroll span {
  width: 64%;
  height: 7px;
  margin-right: 34px;
  border: 1px solid #999;
  background: linear-gradient(90deg, #ddd 49%, #555 49%, #555 50%, #ddd 50%);
}
.hscroll i {
  border: 2px solid transparent;
}
.hscroll .left {
  border-right-color: #111;
}
.hscroll .right-arrow {
  border-left-color: #111;
}
.mid {
  height: 22px;
}
.def {
  height: 12px;
  background: #a6b8d3;
}
.def svg {
  color: #fff;
}
.name {
  display: flex;
  align-items: center;
  gap: 4px;
  padding: 3px 4px;
}
.name input {
  flex: 1;
  min-width: 0;
  height: 12px;
  padding: 0 1px;
  border: 1px solid #888;
  font: inherit;
}
.props {
  flex: 1;
  min-height: 0;
  background: #fff;
}
.props table {
  width: 100%;
  height: 144px;
  border-collapse: collapse;
  table-layout: fixed;
}
.c-mark {
  width: 16px;
}
.c-name {
  width: 87px;
}
.props td, .props th {
  padding: 0 1px;
  font-weight: 400;
  line-height: 7px;
  text-align: left;
}
.props td:first-child, .props .cat {
  background: #f4f5fa;
}
.props .cat th {
  font-weight: 700;
}
.cat i {
  display: block;
  width: 3px;
  height: 3px;
  margin: 0 4px 1px;
  border: solid #333;
  border-width: 0 1px 1px 0;
  transform: rotate(45deg);
}
.selected th, mark {
  background: #0078d7;
  color: #fff;
}

/* status bar */
.status {
  display: flex;
  align-items: center;
  flex: none;
  height: 17px;
  background: #2a5b8d;
  color: #fff;
}
.msg {
  flex: 645;
  padding-left: 5px;
}
.warn {
  flex: 205;
  display: flex;
  align-items: center;
  justify-content: center;
  gap: 3px;
  height: 13px;
  border: solid #5c82aa;
  border-width: 0 1px;
}
.sel {
  flex: 136;
  text-align: center;
}
.status-icons {
  flex: 166;
  display: flex;
  align-items: center;
  gap: 3px;
}
.status-icons svg {
  width: 10px;
  height: 10px;
}
```
